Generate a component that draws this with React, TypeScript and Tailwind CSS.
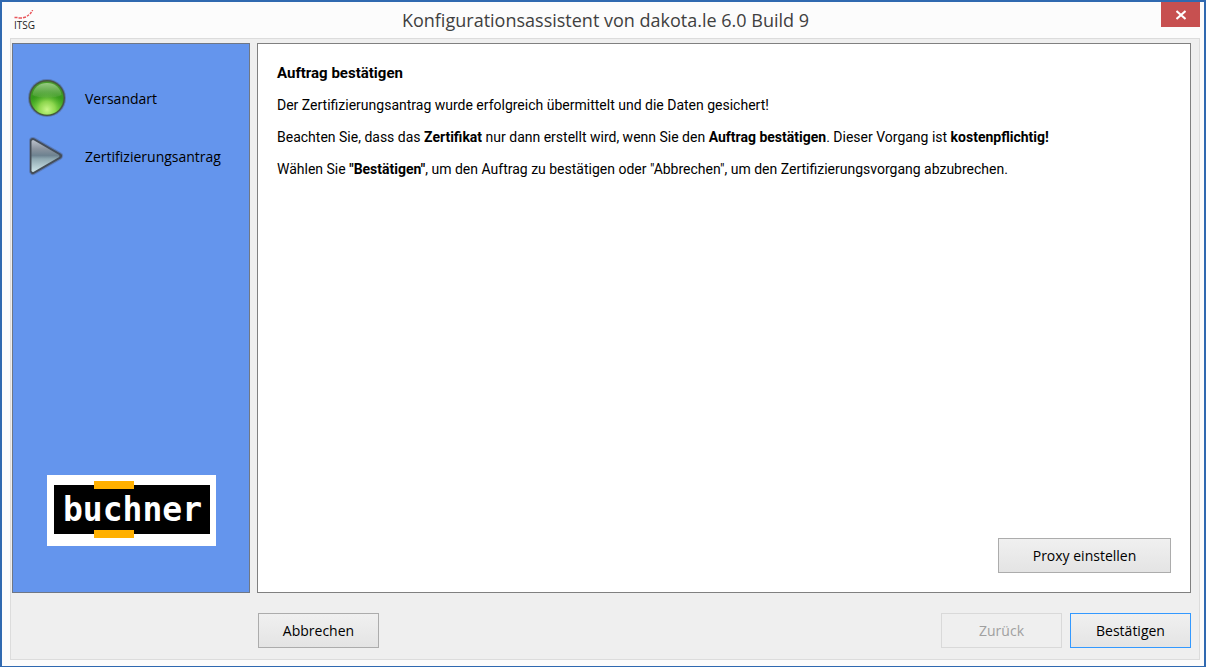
import type { ButtonHTMLAttributes, ReactNode } from 'react';
import { clsx } from 'clsx';

function ItsgIcon() {
  return (
    <svg className="h-6 w-6" viewBox="0 0 24 24" role="img" aria-label="ITSG">
      <path d="M1.500 7.500h3M5.500 8h3.500M10 7.800l3-.8M14 6.300l2-1.500M17 4l1.500-2M19 1l.7-1" fill="none" stroke="#e8555a" strokeWidth="1.4" />
      <text x="1" y="19" className="fill-[#1c1c1c] font-['Open_Sans',sans-serif] text-[10px] font-medium">
        ITSG
      </text>
    </svg>
  );
}

function DoneIcon() {
  return (
    <svg className="h-10 w-10 shrink-0" viewBox="0 0 40 40" aria-hidden="true">
      <defs>
        <linearGradient id="ball" x1="0" y1="0" x2="0" y2="1">
          <stop offset="0" stopColor="#4a9a2c" />
          <stop offset="0.5" stopColor="#35991b" />
          <stop offset="1" stopColor="#5fc932" />
        </linearGradient>
        <radialGradient id="glow" cx="0.5" cy="0.85" r="0.55">
          <stop offset="0" stopColor="#c8f688" />
          <stop offset="0.45" stopColor="#9ade55" stopOpacity="0.85" />
          <stop offset="1" stopColor="#4db428" stopOpacity="0" />
        </radialGradient>
        <linearGradient id="shine" x1="0" y1="0" x2="0" y2="1">
          <stop offset="0" stopColor="#b9dfa9" stopOpacity="0.7" />
          <stop offset="1" stopColor="#6cae55" stopOpacity="0.3" />
        </linearGradient>
      </defs>
      <circle cx="20" cy="19" r="19" fill="#4f6187" opacity="0.55" />
      <circle cx="20" cy="19" r="18" fill="#46583f" />
      <circle cx="20" cy="19" r="16.5" fill="url(#ball)" />
      <circle cx="20" cy="19" r="16.5" fill="url(#glow)" />
      <path d="M5.500 16C6.500 8.500 12.500 4 20 4S33.500 8.500 34.500 16C29 19.500 11 19.500 5.500 16z" fill="url(#shine)" />
    </svg>
  );
}

function CurrentIcon() {
  return (
    <svg className="h-10 w-10 shrink-0" viewBox="0 0 40 40" aria-hidden="true">
      <defs>
        <linearGradient id="arrow" x1="0" y1="0" x2="0" y2="1">
          <stop offset="0" stopColor="#b3bac4" />
          <stop offset="0.25" stopColor="#8b949f" />
          <stop offset="0.48" stopColor="#6d8290" />
          <stop offset="0.6" stopColor="#8fa8b1" />
          <stop offset="1" stopColor="#c8dfe3" />
        </linearGradient>
      </defs>
      <path d="M6 4L32 19L6 34z" fill="none" stroke="#4f6187" strokeWidth="8" strokeLinejoin="round" opacity="0.5" />
      <path d="M6 4L32 19L6 34z" fill="#444d58" stroke="#444d58" strokeWidth="6" strokeLinejoin="round" />
      <path d="M6 4.500L31 19L6 33.500z" fill="url(#arrow)" stroke="url(#arrow)" strokeWidth="3" strokeLinejoin="round" />
    </svg>
  );
}

function BuchnerLogo() {
  return (
    <svg className="h-[71px] w-[169px]" viewBox="0 0 169 71" role="img" aria-label="buchner">
      <path d="M0 0h169v71H0z" fill="#fff" />
      <path d="M7 10h156v49H7z" fill="#000" />
      <path d="M47 6h40v8H47zM47 55h40v8H47z" fill="#ffb000" />
      <text x="16" y="46" className="fill-white font-['DejaVu_Sans_Mono',monospace] text-[33px] font-bold">
        buchner
      </text>
    </svg>
  );
}

interface ButtonProps extends ButtonHTMLAttributes<HTMLButtonElement> {
  primary?: boolean;
  wide?: boolean;
}

function Button({ primary, wide, ...props }: ButtonProps) {
  return (
    <button
      type="button"
      className={clsx(
        'h-[35px] border text-sm',
        wide ? 'w-[173px]' : 'w-[121px]',
        props.disabled
          ? 'border-[#d9d9d9] bg-[#efefef] text-[#a0a0a0]'
          : 'bg-linear-to-b from-[#f0f0f0] to-[#e4e4e4] text-black',
        !props.disabled && (primary ? 'border-[#3399ff]' : 'border-[#acacac]'),
      )}
      {...props}
    />
  );
}

function Step({ icon, children }: { icon: ReactNode; children: ReactNode }) {
  return (
    <li className="flex items-center gap-[18px]">
      {icon}
      <span>{children}</span>
    </li>
  );
}

export default function App() {
  return (
    <div className="flex min-h-screen flex-col border-2 border-b border-[#3069b0] bg-[#fcfcfc] pr-1 pb-1.5 pl-2 font-['Open_Sans','Noto_Sans',sans-serif] text-black">
      {/* Titelleiste */}
      <header className="flex h-9 items-start justify-between">
        <div className="w-10 pt-2 pl-[3px]">
          <ItsgIcon />
        </div>
        <h1 className="pt-1 text-lg leading-7 text-[#404040]">Konfigurationsassistent von dakota.le 6.0 Build 9</h1>
        <button type="button" aria-label="Schließen" className="flex h-[25px] w-[39px] items-center justify-center bg-[#c75050]">
          <svg className="h-2.5 w-2.5" viewBox="0 0 10 10" aria-hidden="true">
            <path d="M0.500 1l9 8M9.500 1l-9 8" stroke="#fff" strokeWidth="2" />
          </svg>
        </button>
      </header>

      <div className="flex flex-1 flex-col border border-[#dcdcdc] bg-[#efefef] px-px pt-1 pb-[11px]">
        <div className="flex flex-1 gap-[7px] pr-[7px]">
          {/* Schritte */}
          <nav className="flex w-[238px] shrink-0 flex-col items-center justify-between border border-[#6f7785] bg-[#6495ed] pt-[35px] pb-[46px]">
            <ol className="flex w-full flex-col gap-[18px] pl-3.5 text-sm">
              <Step icon={<DoneIcon />}>Versandart</Step>
              <Step icon={<CurrentIcon />}>Zertifizierungsantrag</Step>
            </ol>
            <BuchnerLogo />
          </nav>

          <main className="flex flex-1 flex-col justify-between border border-[#808080] bg-white px-[19px] py-[19px]">
            <div className="flex flex-col gap-3 font-[Roboto,'Liberation_Sans',sans-serif] text-sm leading-5">
              <h2 className="text-[15px] leading-5 font-bold">Auftrag bestätigen</h2>
              <p>Der Zertifizierungsantrag wurde erfolgreich übermittelt und die Daten gesichert!</p>
              <p>
                Beachten Sie, dass das <b>Zertifikat</b> nur dann erstellt wird, wenn Sie den <b>Auftrag bestätigen</b>.
                Dieser Vorgang ist <b>kostenpflichtig!</b>
              </p>
              <p>
                Wählen Sie <b>"Bestätigen"</b>, um den Auftrag zu bestätigen oder "Abbrechen", um den
                Zertifizierungsvorgang abzubrechen.
              </p>
            </div>
            <div className="flex justify-end">
              <Button wide>Proxy einstellen</Button>
            </div>
          </main>
        </div>

        <footer className="flex gap-2 pt-5 pr-[7px] pl-[246px]">
          <Button>Abbrechen</Button>
          <div className="flex-1" />
          <Button disabled>Zurück</Button>
          <Button primary>Bestätigen</Button>
        </footer>
      </div>
    </div>
  );
}
